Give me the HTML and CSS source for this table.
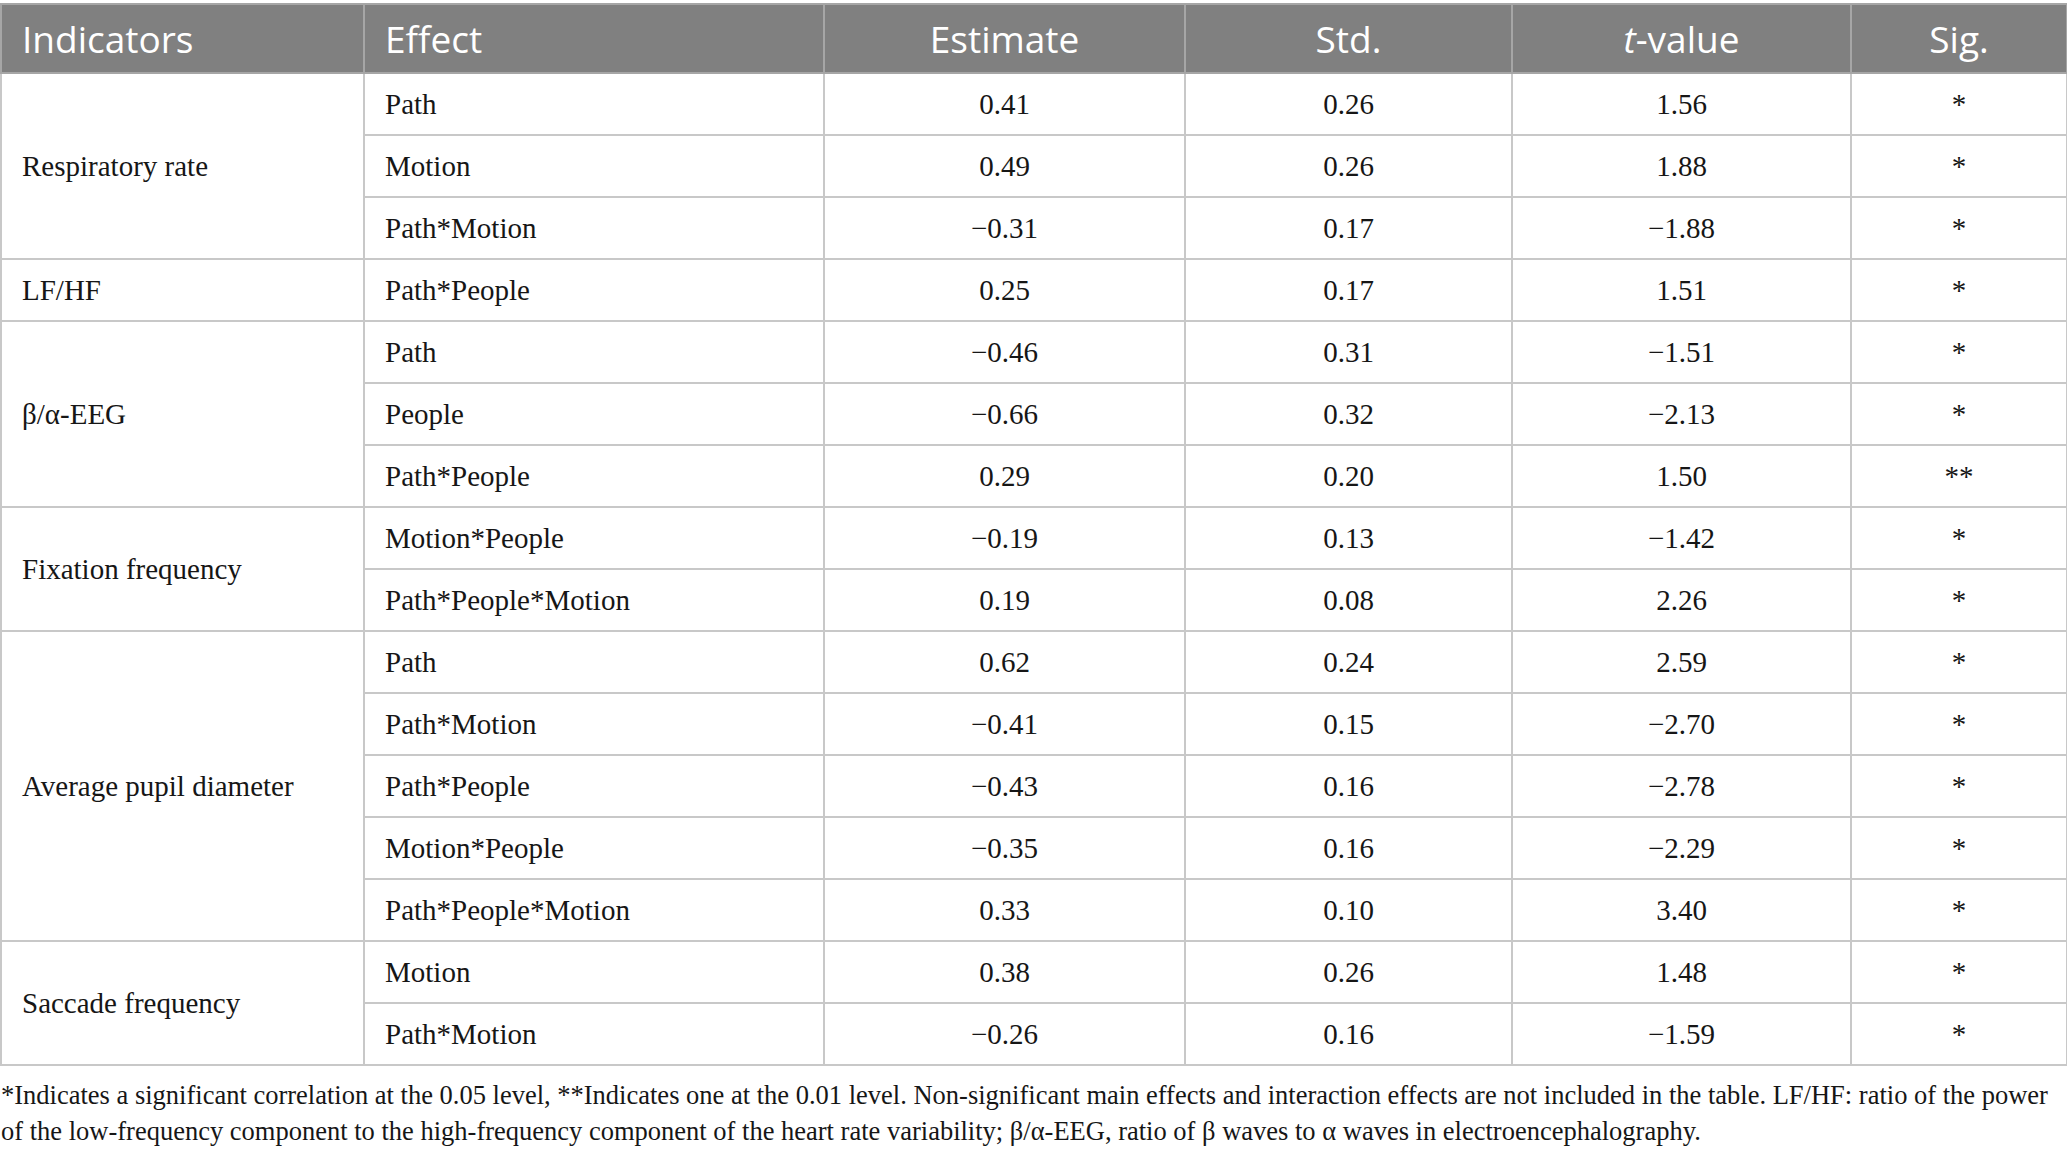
FILE: index.html
```html
<!DOCTYPE html>
<html lang="en">
<head>
<meta charset="utf-8">
<title>Table</title>
<link rel="stylesheet" href="styles.css">
</head>
<body>
<div class="wrap">
<table class="data">
  <colgroup>
    <col class="c1"><col class="c2"><col class="c3"><col class="c4"><col class="c5"><col class="c6">
  </colgroup>
  <thead>
    <tr>
      <th class="left">Indicators</th>
      <th class="left">Effect</th>
      <th>Estimate</th>
      <th>Std.</th>
      <th><i>t</i>-value</th>
      <th>Sig.</th>
    </tr>
  </thead>
  <tbody>
    <tr><td class="left" rowspan="3">Respiratory rate</td><td class="left">Path</td><td>0.41</td><td>0.26</td><td>1.56</td><td>*</td></tr>
    <tr><td class="left">Motion</td><td>0.49</td><td>0.26</td><td>1.88</td><td>*</td></tr>
    <tr><td class="left">Path*Motion</td><td>−0.31</td><td>0.17</td><td>−1.88</td><td>*</td></tr>
    <tr><td class="left">LF/HF</td><td class="left">Path*People</td><td>0.25</td><td>0.17</td><td>1.51</td><td>*</td></tr>
    <tr><td class="left" rowspan="3">β/α-EEG</td><td class="left">Path</td><td>−0.46</td><td>0.31</td><td>−1.51</td><td>*</td></tr>
    <tr><td class="left">People</td><td>−0.66</td><td>0.32</td><td>−2.13</td><td>*</td></tr>
    <tr><td class="left">Path*People</td><td>0.29</td><td>0.20</td><td>1.50</td><td>**</td></tr>
    <tr><td class="left" rowspan="2">Fixation frequency</td><td class="left">Motion*People</td><td>−0.19</td><td>0.13</td><td>−1.42</td><td>*</td></tr>
    <tr><td class="left">Path*People*Motion</td><td>0.19</td><td>0.08</td><td>2.26</td><td>*</td></tr>
    <tr><td class="left" rowspan="5">Average pupil diameter</td><td class="left">Path</td><td>0.62</td><td>0.24</td><td>2.59</td><td>*</td></tr>
    <tr><td class="left">Path*Motion</td><td>−0.41</td><td>0.15</td><td>−2.70</td><td>*</td></tr>
    <tr><td class="left">Path*People</td><td>−0.43</td><td>0.16</td><td>−2.78</td><td>*</td></tr>
    <tr><td class="left">Motion*People</td><td>−0.35</td><td>0.16</td><td>−2.29</td><td>*</td></tr>
    <tr><td class="left">Path*People*Motion</td><td>0.33</td><td>0.10</td><td>3.40</td><td>*</td></tr>
    <tr><td class="left" rowspan="2">Saccade frequency</td><td class="left">Motion</td><td>0.38</td><td>0.26</td><td>1.48</td><td>*</td></tr>
    <tr><td class="left">Path*Motion</td><td>−0.26</td><td>0.16</td><td>−1.59</td><td>*</td></tr>
  </tbody>
</table>
<p class="note">*Indicates a significant correlation at the 0.05 level, **Indicates one at the 0.01 level. Non-significant main effects and interaction effects are not included in the table. LF/HF: ratio of the power of the low-frequency component to the high-frequency component of the heart rate variability; β/α-EEG, ratio of β waves to α waves in electroencephalography.</p>
</div>
</body>
</html>
```

FILE: styles.css
```css
html, body {
  margin: 0;
  padding: 0;
  background: #ffffff;
}

.wrap {
  padding-top: 3px;
  width: 2067px;
}

.data {
  width: 2066px;
  border-collapse: collapse;
  table-layout: fixed;
  font-family: "Liberation Serif", "Times New Roman", serif;
  font-size: 29px;
  color: #161616;
}

.c1 { width: 363px; }
.c2 { width: 460px; }
.c3 { width: 361px; }
.c4 { width: 327px; }
.c5 { width: 339px; }
.c6 { width: 216px; }

.data th {
  background: #808080;
  color: #ffffff;
  font-family: "Open Sans", "Noto Sans", sans-serif;
  font-weight: 400;
  font-size: 37px;
  height: 67px;
  padding: 0 20px;
  text-align: center;
  border: 2px solid #a6a6a6;
  line-height: 1;
}

.data td {
  height: 60px;
  padding: 0 20px;
  text-align: center;
  border: 2px solid #c8c8c8;
  line-height: 1.2;
}

.data .left {
  text-align: left;
}

.note {
  margin: 11px 0 0 0;
  padding: 0 1px;
  font-family: "Liberation Serif", "Times New Roman", serif;
  font-size: 26.5px;
  line-height: 36px;
  color: #161616;
}
```
